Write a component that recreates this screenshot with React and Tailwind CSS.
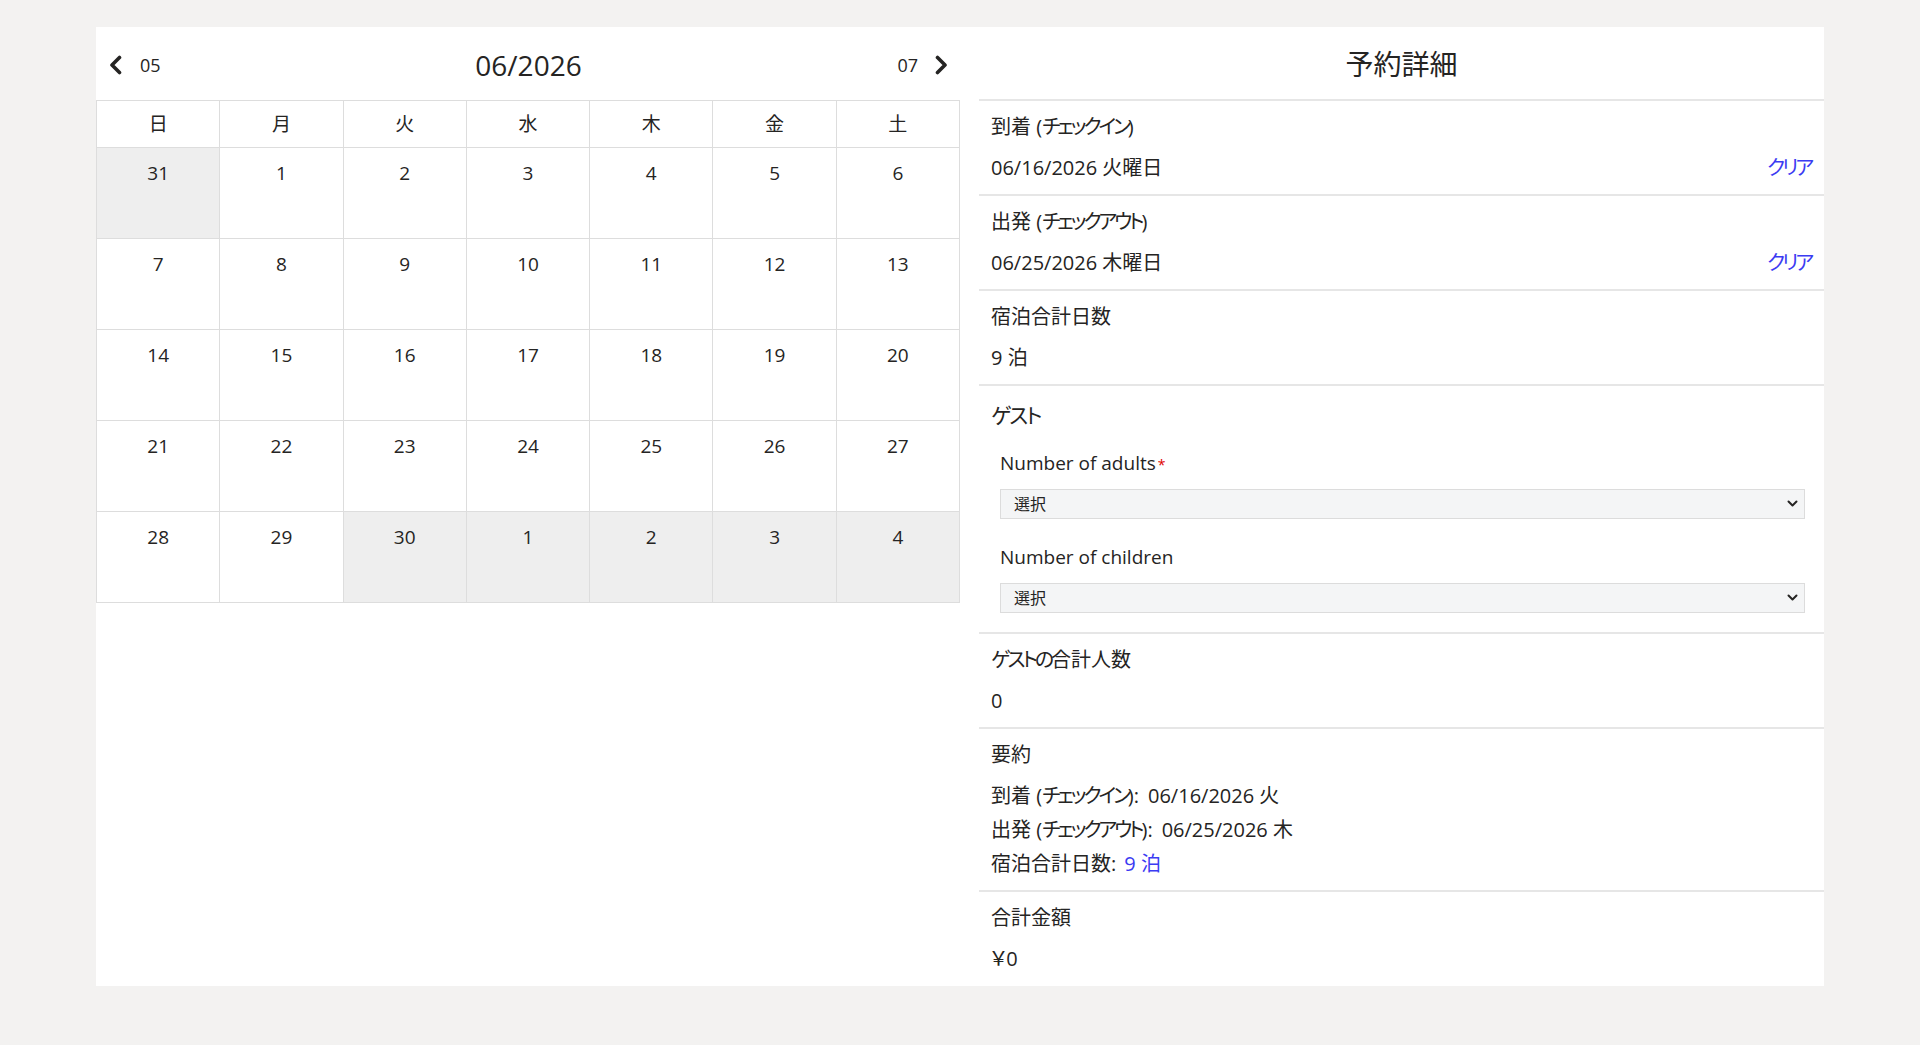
import React from "react";

const FONT = "font-['Open_Sans','Noto_Sans_CJK_JP',sans-serif] [font-feature-settings:'palt']";

const K = ({ children, t = "tracking-[-3px]" }) => <span className={t}>{children}</span>;

const ChevronLeft = () => (
  <svg width="15" height="20" viewBox="0 0 15 20" fill="none">
    <path d="M11.5 2.5 L4 10 L11.5 17.5" stroke="#252423" strokeWidth="3.6" strokeLinecap="round" strokeLinejoin="round" />
  </svg>
);
const ChevronRight = () => (
  <svg width="15" height="20" viewBox="0 0 15 20" fill="none">
    <path d="M3.5 2.5 L11 10 L3.5 17.5" stroke="#252423" strokeWidth="3.6" strokeLinecap="round" strokeLinejoin="round" />
  </svg>
);

const weekdays = ["日", "月", "火", "水", "木", "金", "土"];
const rows = [
  [[31, true], [1], [2], [3], [4], [5], [6]],
  [[7], [8], [9], [10], [11], [12], [13]],
  [[14], [15], [16], [17], [18], [19], [20]],
  [[21], [22], [23], [24], [25], [26], [27]],
  [[28], [29], [30, true], [1, true], [2, true], [3, true], [4, true]],
];

function Calendar() {
  return (
    <div className="w-[864px] shrink-0 self-start">
      <div className="h-[73px] flex items-center justify-between pt-[3px] pl-[12px] pr-[11px]">
        <div className="flex items-center gap-[17px] w-[120px]">
          <ChevronLeft />
          <span className="text-[18px] leading-[26px]">05</span>
        </div>
        <div className="text-[28px] leading-[36px]">06/2026</div>
        <div className="flex items-center justify-end gap-[16px] w-[120px]">
          <span className="text-[18px] leading-[26px]">07</span>
          <ChevronRight />
        </div>
      </div>
      <div className="grid grid-cols-7 border-t border-l border-[#dddddd]">
        {weekdays.map((d) => (
          <div key={d} className="h-[47px] border-r border-b border-[#dddddd] flex items-center justify-center text-[19px]">
            {d}
          </div>
        ))}
        {rows.map((row, ri) =>
          row.map(([n, grey], ci) => (
            <div
              key={ri + "-" + ci}
              className={
                "h-[91px] border-r border-b border-[#dddddd] flex justify-center pt-[12px] text-[19px] leading-[26px] " +
                (grey ? "bg-[#eeeeee]" : "bg-white")
              }
            >
              {n}
            </div>
          ))
        )}
      </div>
    </div>
  );
}

const Divider = () => <div className="h-[2px] bg-[#e6e6e6]" />;

function Field({ label, children, right }) {
  return (
    <div className="pl-[12px] pr-[10px] py-[11px] flex flex-col gap-[11px]">
      <div className="text-[20px] leading-[30px]">{label}</div>
      <div className="flex items-center justify-between text-[20px] leading-[30px]">
        <span>{children}</span>
        {right}
      </div>
    </div>
  );
}

const SelectBox = () => (
  <div className="relative h-[30px]">
    <select className="appearance-none w-full h-[30px] border border-[#dcdcdc] bg-[#f4f5f6] pl-[13px] text-[16px] leading-[28px] text-[#252423] outline-none">
      <option>選択</option>
    </select>
    <svg className="absolute right-[7px] top-[11px] pointer-events-none" width="11" height="8" viewBox="0 0 11 8" fill="none">
      <path d="M1.5 1.5 L5.5 5.5 L9.5 1.5" stroke="#252423" strokeWidth="2" strokeLinecap="round" strokeLinejoin="round" />
    </svg>
  </div>
);

function Panel() {
  const clear = (
    <span className="text-[#3b3bf2] text-[20px] leading-[30px] tracking-[-3px] pr-[3px]">クリア</span>
  );
  return (
    <div className="flex-1 ml-[19px]">
      <div className="h-[72px] flex items-center justify-center pt-[2px] text-[28px] leading-[36px]">予約詳細</div>
      <Divider />
      <Field label={<>到着 (<K>チェックイン</K>)</>} right={clear}>
        06/16/2026 火曜日
      </Field>
      <Divider />
      <Field label={<>出発 (<K>チェックアウト</K>)</>} right={clear}>
        06/25/2026 木曜日
      </Field>
      <Divider />
      <Field label="宿泊合計日数">9 泊</Field>
      <Divider />
      <div className="pl-[12px] pt-[13px] pb-[19px]">
        <div className="text-[21px] leading-[32px]">
          <K t="tracking-[-2px]">ゲスト</K>
        </div>
        <div className="pl-[9px] pr-[19px]">
          <div className="mt-[17px] text-[19px] leading-[30px] flex items-start">
            Number of adults<span className="text-[#e00000] text-[14px] leading-[14px] mt-[10px] ml-[2px]">*</span>
          </div>
          <div className="mt-[11px]">
            <SelectBox />
          </div>
          <div className="mt-[23px] text-[19px] leading-[30px]">Number of children</div>
          <div className="mt-[11px]">
            <SelectBox />
          </div>
        </div>
      </div>
      <Divider />
      <Field label={<><K>ゲストの</K>合計人数</>}>0</Field>
      <Divider />
      <div className="pl-[12px] pt-[11px] pb-[9px]">
        <div className="text-[20px] leading-[30px]">要約</div>
        <div className="mt-[9px] text-[20px] leading-[34px]">
          <div>
            到着 (<K>チェックイン</K>):<span className="ml-[9px]">06/16/2026 火</span>
          </div>
          <div>
            出発 (<K>チェックアウト</K>):<span className="ml-[9px]">06/25/2026 木</span>
          </div>
          <div>
            宿泊合計日数:<span className="ml-[8px] text-[#3b3bf2]">9 泊</span>
          </div>
        </div>
      </div>
      <Divider />
      <div className="pl-[12px] pt-[11px] pb-[12px] flex flex-col gap-[11px]">
        <div className="text-[20px] leading-[30px]">合計金額</div>
        <div className="text-[20px] leading-[30px]">￥0</div>
      </div>
    </div>
  );
}

export default function App() {
  return (
    <div className={"min-h-screen bg-[#f3f2f1] pt-[27px] px-[96px] text-[#252423] " + FONT}>
      <div className="bg-white flex">
        <Calendar />
        <Panel />
      </div>
    </div>
  );
}
